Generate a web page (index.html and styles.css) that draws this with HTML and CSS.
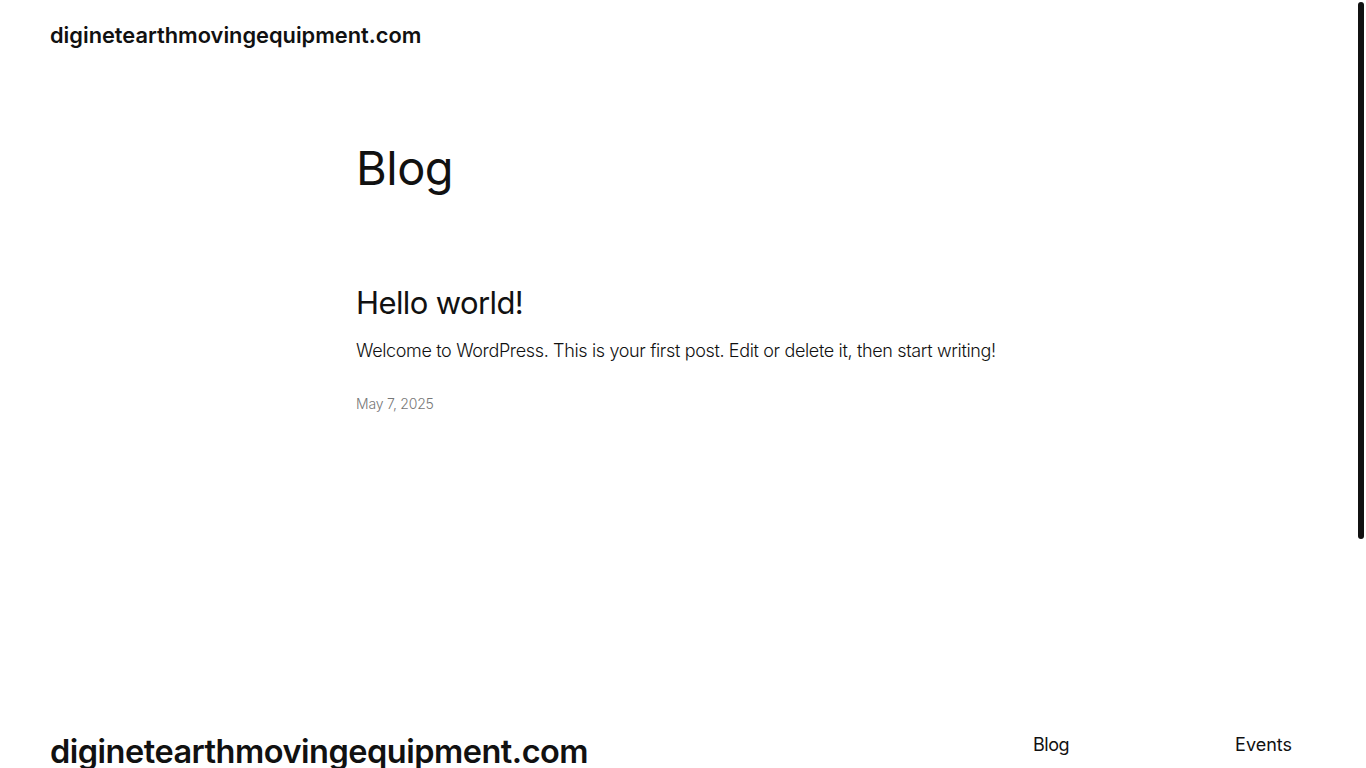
FILE: index.html
```html
<!DOCTYPE html>
<html lang="en">
<head>
<meta charset="utf-8">
<title>Blog – diginetearthmovingequipment.com</title>
<link rel="stylesheet" href="styles.css">
</head>
<body>
<header class="site-header">
  <a class="site-title" href="#">diginetearthmovingequipment.com</a>
</header>
<main class="site-main">
  <h1 class="page-title">Blog</h1>
  <article class="post">
    <h2 class="post-title"><a href="#">Hello world!</a></h2>
    <p class="post-excerpt">Welcome to WordPress. This is your first post. Edit or delete it, then start writing!</p>
    <div class="post-date">May 7, 2025</div>
  </article>
</main>
<footer class="site-footer">
  <div class="footer-row">
    <a class="footer-title" href="#">diginetearthmovingequipment.com</a>
    <nav class="footer-nav">
      <a href="#">Blog</a>
      <a href="#">Events</a>
    </nav>
  </div>
  <p class="credit">Designed with WordPress</p>
</footer>
<div class="scroll-thumb" aria-hidden="true"></div>
</body>
</html>
```
FILE: styles.css
```css
html { background: #fff; }

body {
  margin: 0;
  font-family: Inter, "Noto Sans", sans-serif;
  color: #111;
  font-weight: 300;
}
a { color: inherit; text-decoration: none; }

.scroll-thumb {
  position: fixed;
  top: 2px;
  right: 2px;
  width: 6px;
  height: 537px;
  background: #111;
  border-radius: 3px;
}

.site-header {
  padding: 20px 50px 0;
  height: 50px;
}
.site-title {
  font-size: 21.8px;
  font-weight: 600;
  letter-spacing: 0;
  line-height: 30px;
}

.site-main {
  width: 654px;
  margin: 0 auto;
  padding-top: 70px;
  min-height: 580px;
}
.page-title {
  margin: 0;
  font-size: 47px;
  font-weight: 400;
  letter-spacing: -0.5px;
  line-height: 56px;
}
.post { margin-top: 87px; }
.post-title {
  margin: 0;
  font-size: 31px;
  font-weight: 400;
  letter-spacing: -0.6px;
  line-height: 40px;
}
.post-excerpt {
  margin: 15px 0 0;
  font-size: 18px;
  line-height: 26px;
  letter-spacing: -0.35px;
}
.post-date {
  margin-top: 31px;
  font-size: 14px;
  color: #777;
  letter-spacing: -0.2px;
}

.site-footer {
  padding: 0 50px 300px;
}
.footer-row {
  display: flex;
  justify-content: space-between;
  align-items: flex-start;
}
.footer-title {
  font-size: 32.5px;
  font-weight: 600;
  letter-spacing: -0.5px;
  line-height: 44px;
  margin-top: 10px;
}
.footer-nav {
  display: flex;
  gap: 166px;
  margin-top: 14px;
  margin-right: 24px;
  font-size: 18px;
  font-weight: 400;
}
.footer-nav a:first-child { letter-spacing: -0.5px; }
.credit {
  margin: 80px 0 0;
  font-size: 14px;
  color: #777;
}
```
